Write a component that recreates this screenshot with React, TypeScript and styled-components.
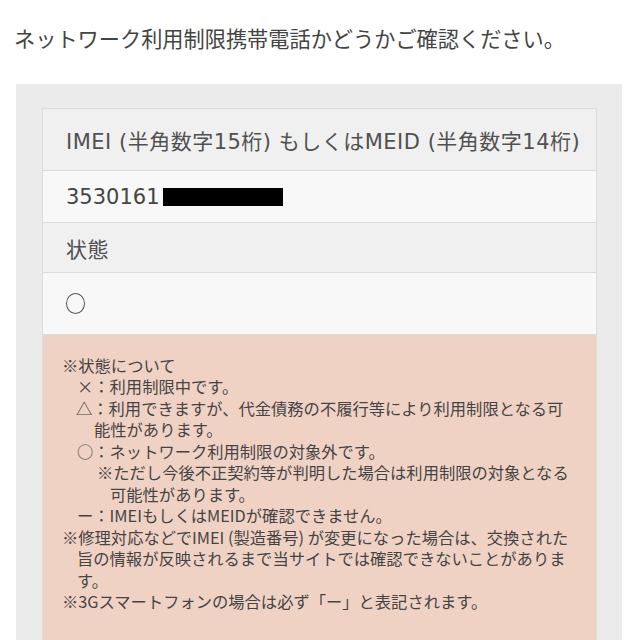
import styled, { createGlobalStyle } from "styled-components";

const GlobalStyle = createGlobalStyle`
  html, body {
    margin: 0;
    padding: 0;
    background: #ffffff;
  }
  body {
    font-family: "Noto Sans CJK JP", "Noto Sans", sans-serif;
    color: #444;
  }
`;

interface NoteLine {
  text: string;
  indent: number;
}

const notes: NoteLine[] = [
  { text: "※状態について", indent: 0 },
  { text: "×：利用制限中です。", indent: 15 },
  { text: "△：利用できますが、代金債務の不履行等により利用制限となる可", indent: 14 },
  { text: "能性があります。", indent: 32 },
  { text: "○：ネットワーク利用制限の対象外です。", indent: 15 },
  { text: "※ただし今後不正契約等が判明した場合は利用制限の対象となる", indent: 35 },
  { text: "可能性があります。", indent: 48 },
  { text: "ー：IMEIもしくはMEIDが確認できません。", indent: 15 },
  { text: "※修理対応などでIMEI (製造番号) が変更になった場合は、交換された", indent: 0 },
  { text: "旨の情報が反映されるまで当サイトでは確認できないことがありま", indent: 15 },
  { text: "す。", indent: 15 },
  { text: "※3Gスマートフォンの場合は必ず「ー」と表記されます。", indent: 0 },
];

const App = () => {
  return (
    <>
      <GlobalStyle />
      <Page>
        <Heading>ネットワーク利用制限携帯電話かどうかご確認ください。</Heading>
        <Panel>
          <Card>
            <HeaderRow>IMEI (半角数字15桁) もしくはMEID (半角数字14桁)</HeaderRow>
            <ValueRow $height={51}>
              3530161
              <Redacted />
            </ValueRow>
            <HeaderRow $height={49}>状態</HeaderRow>
            <ValueRow $height={61}>
              <Circle />
            </ValueRow>
            <Notes>
              {notes.map((line, i) => (
                <NoteText key={i} style={{ paddingLeft: line.indent }}>
                  {line.text}
                </NoteText>
              ))}
            </Notes>
          </Card>
        </Panel>
      </Page>
    </>
  );
};

export default App;

const Page = styled.div`
  width: 640px;
  height: 640px;
  overflow: hidden;
  display: flex;
  flex-direction: column;
`;

const Heading = styled.h1`
  flex-shrink: 0;
  margin: 0;
  padding: 22px 0 0 14px;
  height: 60px;
  box-sizing: border-box;
  font-size: 21.2px;
  font-weight: 400;
  color: #444;
  white-space: nowrap;
`;

const Panel = styled.div`
  flex-shrink: 0;
  margin: 24px 18px 0 16px;
  background: #ebebeb;
  padding: 24px 25px 40px 26px;
`;

const Card = styled.div`
  border: 1px solid #dcdcdc;
  border-bottom: none;
  display: flex;
  flex-direction: column;
`;

const HeaderRow = styled.div<{ $height?: number }>`
  height: ${(p) => p.$height ?? 61}px;
  display: flex;
  align-items: center;
  padding-left: 23px;
  background: #f0f0f0;
  border-bottom: 1px solid #dcdcdc;
  font-family: "DejaVu Sans", "Noto Sans CJK JP", sans-serif;
  font-size: 21px;
  letter-spacing: 0.5px;
  color: #505050;
  white-space: nowrap;
`;

const ValueRow = styled.div<{ $height?: number }>`
  height: ${(p) => p.$height ?? 52}px;
  display: flex;
  align-items: center;
  padding-left: 23px;
  background: #f8f8f8;
  border-bottom: 1px solid #dcdcdc;
  font-family: "DejaVu Sans", "Noto Sans CJK JP", sans-serif;
  font-size: 21px;
  color: #444;
`;

const Redacted = styled.span`
  display: inline-block;
  width: 120px;
  height: 18px;
  background: #000;
  margin-left: 3px;
`;

const Circle = styled.span`
  display: inline-block;
  width: 17px;
  height: 19px;
  border: 1px solid #555;
  border-radius: 50%;
`;

const Notes = styled.div`
  background: #f0d2c4;
  padding: 20px 0 28px 19px;
  display: flex;
  flex-direction: column;
`;

const NoteText = styled.div`
  font-size: 16.3px;
  line-height: 21.45px;
  color: #444;
  white-space: nowrap;
`;
